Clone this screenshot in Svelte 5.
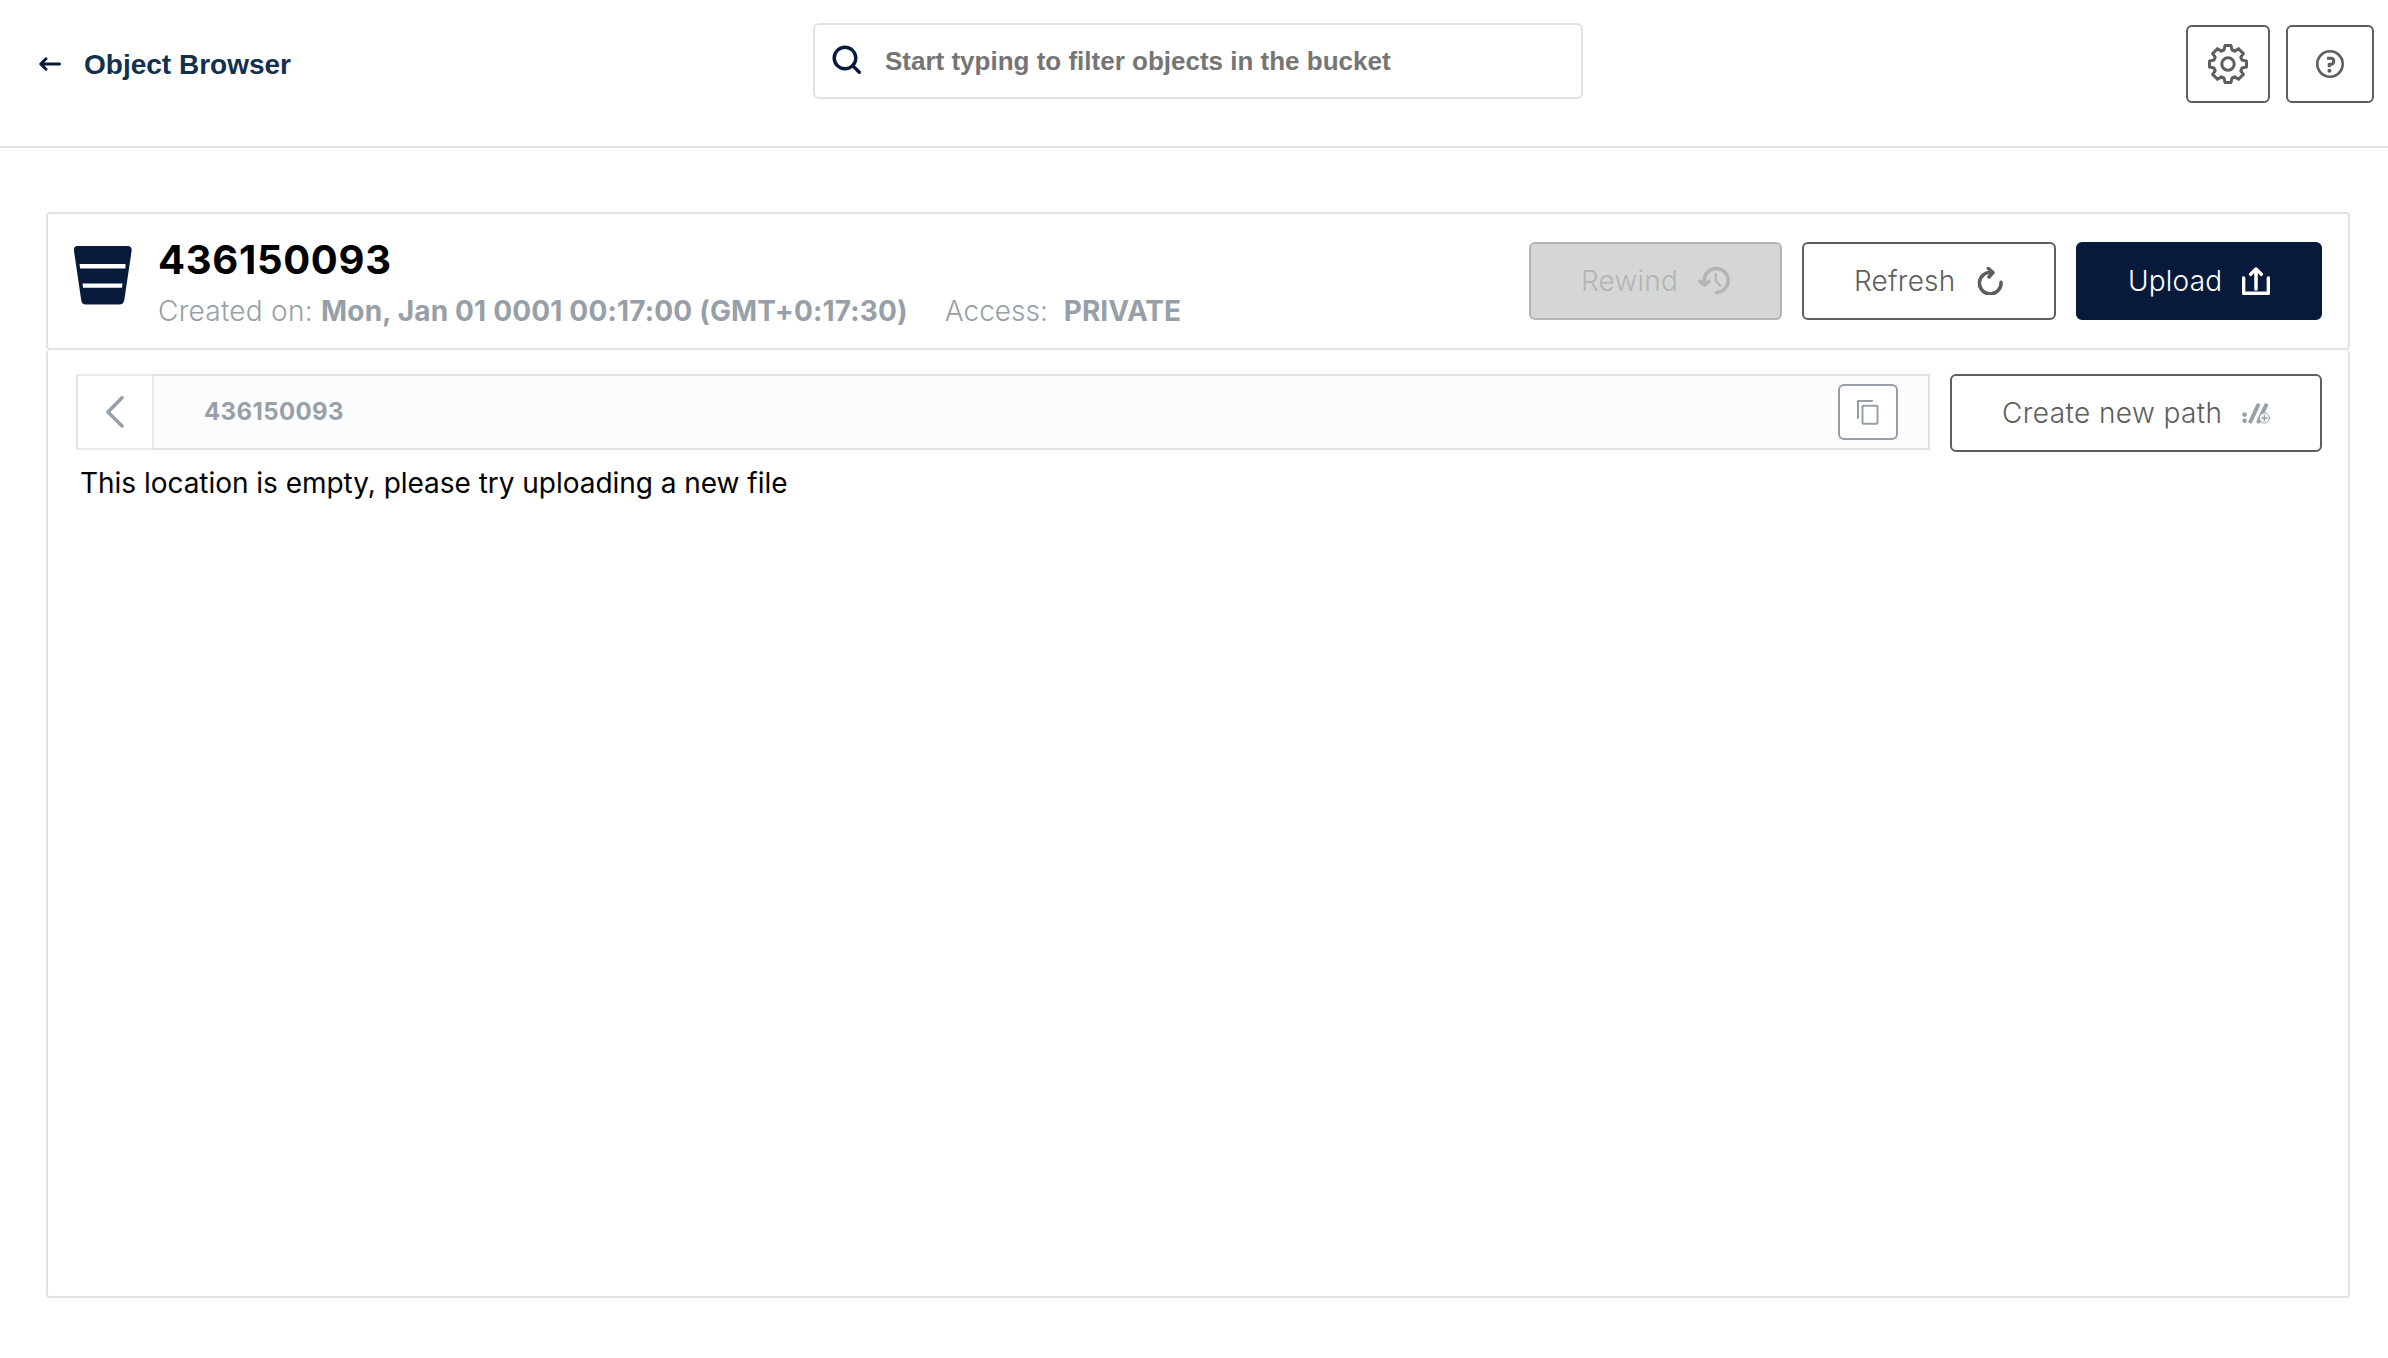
<script>
  const bucket = '436150093';
</script>

<div class="page">
  <header>
    <div class="title">
      <svg class="arrow" width="22" height="14" viewBox="0 0 22 14"><path d="M20.5 7H2.5M7 1.8L1.8 7L7 12.2" /></svg>
      <span>Object Browser</span>
    </div>
    <label class="search">
      <svg width="30" height="30" viewBox="0 0 30 30"><circle cx="13" cy="13" r="10.8" /><path d="M20.5 20.5L27.3 27.3" /></svg>
      <input type="text" placeholder="Start typing to filter objects in the bucket" />
    </label>
    <div class="tools">
      <button class="btn settings" aria-label="Settings">
        <svg width="40" height="40" viewBox="-20 -20 40 40">
          <path d="M-3 -18.5H3L4 -14L6.8 -12.8L10.4 -15.4L15.4 -10.4L12.8 -6.8L14 -4L18.5 -3V3L14 4L12.8 6.8L15.4 10.4L10.4 15.4L6.8 12.8L4 14L3 18.5H-3L-4 14L-6.8 12.8L-10.4 15.4L-15.4 10.4L-12.8 6.8L-14 4L-18.5 3V-3L-14 -4L-12.8 -6.8L-15.4 -10.4L-10.4 -15.4L-6.8 -12.8L-4 -14Z" />
          <circle r="6.2" />
        </svg>
      </button>
      <button class="btn help" aria-label="Help">
        <svg width="28" height="28" viewBox="0 0 28 28">
          <circle cx="14" cy="14" r="12.7" />
          <path class="mark" d="M11 8.3H15.3A3 3 0 0 1 15.3 14.2H13.2V17.2" />
          <circle class="dot" cx="13.4" cy="20.8" r="2" />
        </svg>
      </button>
    </div>
  </header>

  <main>
    <section class="summary">
      <svg class="bucket" width="60" height="60" viewBox="0 0 60 60">
        <path class="body" d="M4.5 1H54.5Q59.2 1 58.6 6L51.3 55Q50.5 59.6 46 59.6H13Q8.8 59.6 8.2 55L1 6Q.3 1 4.5 1Z" />
        <path class="band" d="M6.5 19H52.5V23.4H7.2ZM9.5 38.4H49.5L49 42.8H10Z" />
      </svg>
      <div class="info">
        <h1>{bucket}</h1>
        <p>
          <span class="created">Created on: <b>Mon, Jan 01 0001 00:17:00 (GMT+0:17:30)</b></span>
          <span class="access">Access:</span><b class="private">PRIVATE</b>
        </p>
      </div>
      <div class="actions">
        <button class="btn rewind" disabled>
          <span>Rewind</span>
          <svg width="32" height="28" viewBox="0 0 32 28">
            <path class="thick" d="M6.2 15V13.2A12 12 0 1 1 18.5 25.5M2 14.3L6.5 18.2L11 14.3" />
            <path class="hand" d="M17.8 7.3V14.2L22.4 18.8" />
          </svg>
        </button>
        <button class="btn refresh">
          <span>Refresh</span>
          <svg width="26" height="28" viewBox="0 0 26 28"><path d="M24 15.2A10.8 10.8 0 1 1 15 5.5M11.4 1.5L16 5.5L12 10" /></svg>
        </button>
        <button class="btn upload">
          <span>Upload</span>
          <svg width="28" height="28" viewBox="0 0 28 28"><path d="M1.6 11V26.2H26.4V11M14 22V2.5M8.7 7.3L14 2L19.3 7.3" /></svg>
        </button>
      </div>
    </section>

    <section class="content">
      <div class="bar">
        <nav>
          <button class="back" aria-label="Back"><svg width="20" height="32" viewBox="0 0 20 32"><path d="M17 1.8L3 16L17 30" /></svg></button>
          <div class="crumb">
            <span>{bucket}</span>
            <button class="copy" aria-label="Copy path">
              <svg width="22" height="25" viewBox="0 0 22 25"><path d="M1 18V1H15" /><rect x="5.5" y="5.8" width="15" height="18" rx="1" /></svg>
            </button>
          </div>
        </nav>
        <button class="btn create">
          <span>Create new path</span>
          <svg width="28" height="21" viewBox="0 0 28 21">
            <circle cx="2.6" cy="11.6" r="2.3" /><circle cx="2.6" cy="17.8" r="2.3" />
            <path class="slash" d="M8.5 18.5L16 2.3M16.5 18.5L24 2.3" />
            <circle class="badge" cx="22.4" cy="15" r="5" />
            <path class="plus" d="M22.4 12.5V17.5M19.9 15H24.9" />
          </svg>
        </button>
      </div>
      <p class="empty">This location is empty, please try uploading a new file</p>
    </section>
  </main>
</div>

<style>
  :global(body) { background: #fff; }
  .page { box-sizing: border-box; height: 1358px; display: flex; flex-direction: column; font-family: Inter, sans-serif; color: #000; }
  .page :global(*) { box-sizing: border-box; }
  svg { display: block; flex: none; fill: none; stroke: currentColor; stroke-linecap: round; stroke-linejoin: round; }
  button { font: inherit; padding: 0; margin: 0; }

  header { height: 148px; border-bottom: 2px solid #e3e3e3; display: grid; grid-template-columns: 813px 770px 1fr; align-items: start; }
  .title { display: flex; align-items: center; padding: 48px 0 0 39px; gap: 23px; font: bold 28px/32px "Liberation Sans", Arial, sans-serif; color: #13304f; }
  .title span { margin-top: 1px; margin-bottom: -1px; }
  .arrow { stroke-width: 3; color: #081a3b; }
  .search { display: flex; align-items: center; gap: 22px; height: 76px; margin-top: 23px; padding: 0 18px; border: 2px solid #e2e2e2; border-radius: 6px; }
  .search svg { stroke-width: 3.4; color: #081a3b; margin: 0 1px 2px -1px; }
  input { flex: 1; border: 0; outline: 0; padding: 0; background: none; font: bold 26px/30px "Liberation Sans", Arial, sans-serif; }
  input::placeholder { color: #757575; opacity: 1; }
  .tools { display: flex; justify-content: flex-end; gap: 16px; padding: 25px 14px 0 0; }

  .btn { display: flex; align-items: center; justify-content: center; height: 78px; border: 2px solid #5e5e5e; border-radius: 6px; background: #fff; color: #5e5e5e; font-size: 28px; line-height: 34px; white-space: nowrap; }
  .settings { width: 84px; }
  .settings svg { stroke-width: 3; }
  .help { width: 88px; }
  .help svg { stroke-width: 2.6; }
  .help .mark { stroke-width: 3; stroke-linecap: butt; }
  .help .dot { fill: currentColor; stroke: none; }

  main { flex: 1; display: flex; flex-direction: column; padding: 64px 38px 60px 46px; }
  .summary { display: flex; height: 138px; border: 2px solid #e2e2e2; border-radius: 4px; padding: 28px 26px 0 25px; }
  .bucket { margin: 3px 25px 0 0; stroke: none; }
  .body { fill: #081a3b; }
  .band { fill: #fff; }
  .info { flex: 1; }
  h1 { margin: -6px 0 0; font-size: 40px; line-height: 48px; font-weight: 700; letter-spacing: .7px; }
  p { margin: 0; font-size: 28px; line-height: 34px; }
  .info p { display: flex; margin-top: 10px; color: #979fa8; font-weight: 300; white-space: nowrap; }
  .created { letter-spacing: .27px; }
  .created b { letter-spacing: .17px; }
  b { font-weight: 700; }
  .access { margin-left: 37px; }
  .private { margin-left: 16px; }
  .actions { display: flex; gap: 20px; }
  .actions .btn, .create { justify-content: space-between; padding: 0 50px 0 50px; font-weight: 300; }
  .actions span { letter-spacing: .2px; }
  .actions svg { stroke-width: 3.5; }
  .actions .rewind { width: 253px; background: #d5d7d6; border-color: #b4b4b4; color: #b4b4b4; }
  .rewind .hand { stroke-width: 2.2; }
  .actions .refresh { width: 254px; padding-right: 51px; }
  .actions .upload { width: 246px; background: #081a3b; border-color: #081a3b; color: #fff; }

  .content { flex: 1; border: 2px solid #e2e2e2; border-top: 0; border-radius: 4px; padding: 24px 26px 0 28px; }
  .bar { display: flex; gap: 20px; }
  nav { flex: 1; display: flex; height: 76px; border: 2px solid #e2e2e2; }
  .back { width: 76px; margin: -2px 0; border: solid #eaeaea; border-width: 2px 2px 2px 0; background: #fff; color: #979fa8; display: flex; align-items: center; justify-content: center; }
  .back svg { stroke-width: 3.5; }
  .crumb { flex: 1; display: flex; align-items: center; justify-content: space-between; padding: 0 30px 0 50px; background: #fcfcfc; color: #979fa8; font-size: 24px; font-weight: 700; }
  .crumb span { letter-spacing: .38px; margin-bottom: 1px; }
  .copy { width: 60px; height: 56px; border: 2px solid #979da8; border-radius: 6px; background: #fff; color: #979fa8; display: flex; align-items: center; justify-content: center; }
  .copy svg { stroke-width: 2; }
  .btn.create { width: 372px; }
  .create span { letter-spacing: .4px; }
  .create svg { color: #979fa8; }
  .create svg circle { fill: currentColor; stroke: none; }
  .create .slash { stroke-width: 4; }
  .create svg .badge { fill: #fff; stroke: #979fa8; stroke-width: 1; }
  .create .plus { stroke-width: 1.6; }
  .empty { margin: 12px 0 0 4px; line-height: 38px; font-weight: 400; letter-spacing: -.03px; }
</style>
